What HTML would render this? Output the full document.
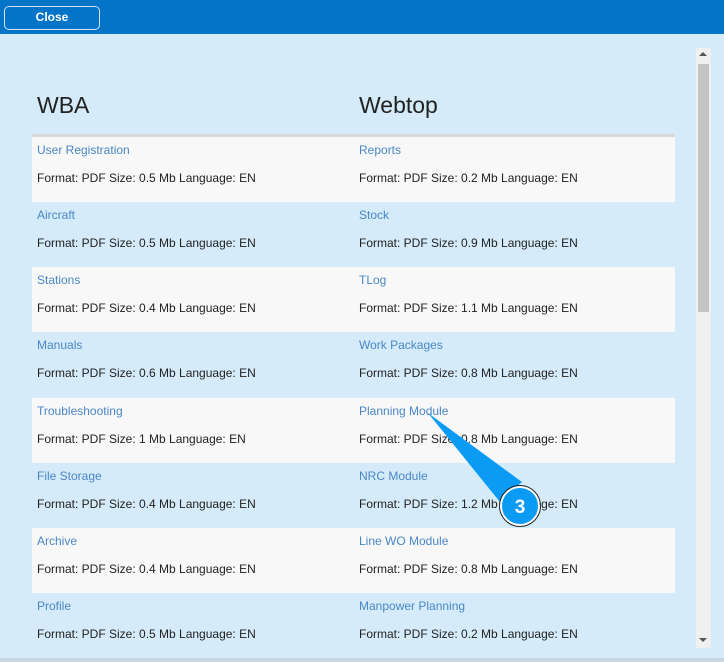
<!DOCTYPE html><html><head><style>
body{margin:0;width:724px;height:662px;background:#d5ebfa;font-family:"Liberation Sans",sans-serif;position:relative;overflow:hidden}
.top{position:absolute;left:0;top:0;width:724px;height:34px;background:#0474c9}
.btn{position:absolute;left:4px;top:6px;width:96px;height:24px;border:1px solid #cfe3f5;border-radius:5px;color:#fff;background:#0474c9;font-size:12px;font-weight:bold;text-align:center;line-height:21px;box-sizing:border-box}
h1{position:absolute;top:92px;margin:0;font-weight:normal;font-size:23px;color:#222}
.row{position:absolute;left:32px;width:643px;height:65px}
.w{background:#f8f8f8}
.c{position:absolute;font-size:12px}
.t{color:#4a86c5;top:6px}.f{color:#222;top:34px}
.sb{position:absolute;left:696px;top:48px;width:15px;height:600px;background:#f0f0f0}
.th{position:absolute;left:698px;top:64px;width:11px;height:248px;background:#c4c4c4}
</style></head><body>
<div class="top"><div class="btn">Close</div></div>
<h1 style="left:37px">WBA</h1><h1 style="left:359px">Webtop</h1>
<div style="position:absolute;left:32px;top:134px;width:643px;height:3px;background:#d8d8d8"></div>
<div class="row w" style="top:137px"><span class="c t" style="left:5px">User Registration</span><span class="c f" style="left:5px">Format: PDF Size: 0.5 Mb Language: EN</span><span class="c t" style="left:327px">Reports</span><span class="c f" style="left:327px">Format: PDF Size: 0.2 Mb Language: EN</span></div>
<div class="row" style="top:202px"><span class="c t" style="left:5px">Aircraft</span><span class="c f" style="left:5px">Format: PDF Size: 0.5 Mb Language: EN</span><span class="c t" style="left:327px">Stock</span><span class="c f" style="left:327px">Format: PDF Size: 0.9 Mb Language: EN</span></div>
<div class="row w" style="top:267px"><span class="c t" style="left:5px">Stations</span><span class="c f" style="left:5px">Format: PDF Size: 0.4 Mb Language: EN</span><span class="c t" style="left:327px">TLog</span><span class="c f" style="left:327px">Format: PDF Size: 1.1 Mb Language: EN</span></div>
<div class="row" style="top:332px"><span class="c t" style="left:5px">Manuals</span><span class="c f" style="left:5px">Format: PDF Size: 0.6 Mb Language: EN</span><span class="c t" style="left:327px">Work Packages</span><span class="c f" style="left:327px">Format: PDF Size: 0.8 Mb Language: EN</span></div>
<div class="row w" style="top:398px"><span class="c t" style="left:5px">Troubleshooting</span><span class="c f" style="left:5px">Format: PDF Size: 1 Mb Language: EN</span><span class="c t" style="left:327px">Planning Module</span><span class="c f" style="left:327px">Format: PDF Size: 0.8 Mb Language: EN</span></div>
<div class="row" style="top:463px"><span class="c t" style="left:5px">File Storage</span><span class="c f" style="left:5px">Format: PDF Size: 0.4 Mb Language: EN</span><span class="c t" style="left:327px">NRC Module</span><span class="c f" style="left:327px">Format: PDF Size: 1.2 Mb Language: EN</span></div>
<div class="row w" style="top:528px"><span class="c t" style="left:5px">Archive</span><span class="c f" style="left:5px">Format: PDF Size: 0.4 Mb Language: EN</span><span class="c t" style="left:327px">Line WO Module</span><span class="c f" style="left:327px">Format: PDF Size: 0.8 Mb Language: EN</span></div>
<div class="row" style="top:593px"><span class="c t" style="left:5px">Profile</span><span class="c f" style="left:5px">Format: PDF Size: 0.5 Mb Language: EN</span><span class="c t" style="left:327px">Manpower Planning</span><span class="c f" style="left:327px">Format: PDF Size: 0.2 Mb Language: EN</span></div>
<div class="sb"><div style="position:absolute;left:3px;top:4px;border:4px solid transparent;border-bottom:4px solid #555;border-top:0"></div><div style="position:absolute;left:3px;bottom:6px;border:4px solid transparent;border-top:4px solid #555;border-bottom:0"></div></div>
<div class="th"></div>
<div style="position:absolute;left:0;top:658px;width:724px;height:4px;background:#c9d6e0"></div>
<svg style="position:absolute;left:0;top:0" width="724" height="662">
<polygon points="428,413 522,482 500,502" fill="#0b9bf5"/>
<circle cx="520" cy="506" r="19" fill="#0b9bf5" stroke="#fff" stroke-width="2"/>
<circle cx="520" cy="506" r="20.5" fill="none" stroke="#222" stroke-width="1"/>
<text x="520" y="513" text-anchor="middle" font-family="Liberation Sans" font-weight="bold" font-size="19" fill="#fff">3</text>
</svg>
</body></html>
